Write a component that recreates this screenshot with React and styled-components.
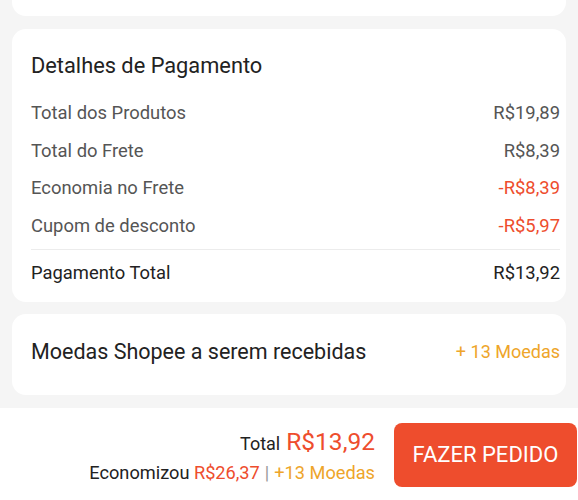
import React from "react";
import styled, { createGlobalStyle } from "styled-components";

const Global = createGlobalStyle`
  html, body { margin: 0; padding: 0; background: #f5f5f5; }
  body { font-family: Roboto, "Noto Sans", Arial, sans-serif; -webkit-font-smoothing: antialiased; }
`;

const Page = styled.div`
  width: 578px;
  height: 500px;
  overflow: hidden;
  display: flex;
  flex-direction: column;
  background: #f5f5f5;
`;

const Content = styled.div`
  display: flex;
  flex-direction: column;
  gap: 13px;
  padding: 0 12px;
`;

const Card = styled.section`
  background: #fff;
  border-radius: ${p => (p.$cut ? "0 0 14px 14px" : "14px")};
  height: ${p => p.$h || "auto"};
  box-sizing: border-box;
`;

const Details = styled(Card)`
  padding: 23px 6px 10px 19px;
  display: flex;
  flex-direction: column;
`;

const Title = styled.h2`
  margin: 0 0 14px;
  font-size: 21.8px;
  line-height: 28px;
  font-weight: 400;
  color: #222;
`;

const Row = styled.div`
  display: flex;
  justify-content: space-between;
  align-items: center;
  height: 37.5px;
  font-size: 18.4px;
  color: ${p => (p.$strong ? "#222" : "#555")};
`;

const Value = styled.span`
  color: ${p => (p.$neg ? "#ee4d2d" : p.$strong ? "#222" : "#555")};
`;

const Divider = styled.hr`
  border: 0;
  border-top: 1px solid #ececec;
  margin: 5px 0 4px;
`;

const CoinsCard = styled(Card)`
  height: 81px;
  padding: 0 6px 0 19px;
  display: flex;
  align-items: center;
  justify-content: space-between;
  margin-top: -1px;
`;

const CoinsLabel = styled.span`
  font-size: 21.5px;
  color: #222;
  margin-top: -5px;
`;

const CoinsValue = styled.span`
  font-size: 18px;
  color: #eea52a;
  margin-top: -5px;
`;

const BottomBar = styled.footer`
  margin-top: 13px;
  flex: 1;
  background: #fff;
  display: flex;
  justify-content: flex-end;
  align-items: flex-start;
  padding: 15px 1px 0 0;
  gap: 19px;
`;

const Summary = styled.div`
  display: flex;
  flex-direction: column;
  align-items: flex-end;
  padding-top: 4px;
`;

const TotalLine = styled.div`
  display: flex;
  align-items: baseline;
  gap: 6px;
  line-height: 30px;
`;

const TotalLabel = styled.span`
  font-size: 18px;
  color: #222;
`;

const TotalPrice = styled.span`
  font-size: 24.5px;
  color: #ee4d2d;
`;

const SavedLine = styled.div`
  font-size: 18.2px;
  line-height: 28px;
  color: #222;
`;

const Red = styled.span`
  color: #ee4d2d;
`;

const Sep = styled.span`
  color: #999;
  margin: 0 5px;
`;

const Gold = styled.span`
  color: #eea52a;
`;

const OrderButton = styled.button`
  width: 183px;
  height: 64px;
  border: 0;
  border-radius: 8px;
  background: #ee4d2d;
  color: #fff;
  font-family: inherit;
  font-size: 22px;
  cursor: pointer;
`;

const rows = [
  { label: "Total dos Produtos", value: "R$19,89" },
  { label: "Total do Frete", value: "R$8,39" },
  { label: "Economia no Frete", value: "-R$8,39", neg: true },
  { label: "Cupom de desconto", value: "-R$5,97", neg: true },
];

export default function App() {
  return (
    <Page>
      <Global />
      <Content>
        <Card $cut $h="16px" />
        <Details>
          <Title>Detalhes de Pagamento</Title>
          {rows.map(r => (
            <Row key={r.label}>
              <span>{r.label}</span>
              <Value $neg={r.neg}>{r.value}</Value>
            </Row>
          ))}
          <Divider />
          <Row $strong>
            <span>Pagamento Total</span>
            <Value $strong>R$13,92</Value>
          </Row>
        </Details>
        <CoinsCard>
          <CoinsLabel>Moedas Shopee a serem recebidas</CoinsLabel>
          <CoinsValue>+ 13 Moedas</CoinsValue>
        </CoinsCard>
      </Content>
      <BottomBar>
        <Summary>
          <TotalLine>
            <TotalLabel>Total</TotalLabel>
            <TotalPrice>R$13,92</TotalPrice>
          </TotalLine>
          <SavedLine>
            Economizou <Red>R$26,37</Red>
            <Sep>|</Sep>
            <Gold>+13 Moedas</Gold>
          </SavedLine>
        </Summary>
        <OrderButton>FAZER PEDIDO</OrderButton>
      </BottomBar>
    </Page>
  );
}
